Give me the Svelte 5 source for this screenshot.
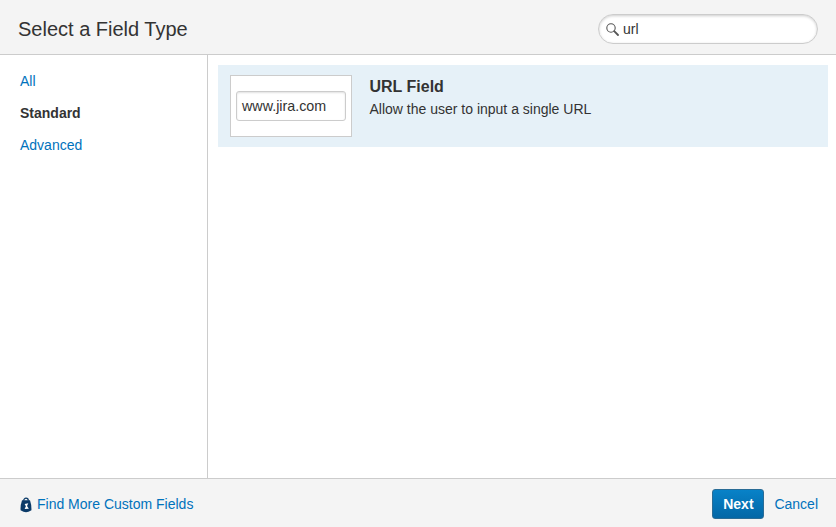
<script>
    let query = $state("url");
    const categories = [
        { name: "All", active: false },
        { name: "Standard", active: true },
        { name: "Advanced", active: false }
    ];
</script>

<div class="dialog">
    <header class="head">
        <h2>Select a Field Type</h2>
        <div class="search">
            <svg width="13" height="13" viewBox="0 0 13 13" fill="none" stroke="#555">
                <circle cx="5" cy="5" r="4.2" stroke-width="1.1" />
                <path d="M8.2 8.2 L12 12" stroke-width="1.8" stroke-linecap="round" />
            </svg>
            <input type="text" bind:value={query} />
        </div>
    </header>

    <div class="body">
        <nav class="side">
            {#each categories as c}
                <a href="#top" class:active={c.active}>{c.name}</a>
            {/each}
        </nav>
        <main class="list">
            <div class="item">
                <div class="preview">
                    <div class="fake">www.jira.com</div>
                </div>
                <div class="info">
                    <h3>URL Field</h3>
                    <p>Allow the user to input a single URL</p>
                </div>
            </div>
        </main>
    </div>

    <footer class="foot">
        <a class="more" href="#top">
            <svg width="12" height="17" viewBox="0 0 13 17">
                <path d="M4 4.4 C4 .8 9 .8 9 4.4" fill="none" stroke="#0b3a68" stroke-width="1.4" />
                <path d="M2.2 4 L10.8 4 Q12.6 9 12.4 14.6 Q9 16.8 6.5 16.8 Q4 16.8 .6 14.6 Q.4 9 2.2 4 Z" fill="#0b3a68" />
                <path d="M5 8 L9 7.2 L7.6 10 L9.6 13 L5 13.4 L6.4 10.4 Z" fill="#fff" />
            </svg>
            Find More Custom Fields
        </a>
        <div class="actions">
            <button type="button">Next</button>
            <a href="#top">Cancel</a>
        </div>
    </footer>
</div>

<style>
    :global(body) {
        margin: 0;
    }
    .dialog {
        display: flex;
        flex-direction: column;
        width: 836px;
        height: 527px;
        overflow: hidden;
        background: #fff;
        color: #333;
        font-family: "Liberation Sans", Arial, sans-serif;
        font-size: 14px;
    }
    a {
        color: #0072bc;
        text-decoration: none;
    }
    .head {
        display: flex;
        flex: none;
        align-items: center;
        justify-content: space-between;
        box-sizing: border-box;
        height: 55px;
        padding: 4px 18px 0;
        background: #f4f4f4;
        border-bottom: 1px solid #ccc;
    }
    h2 {
        margin: 0;
        font-size: 20px;
        font-weight: normal;
        line-height: 30px;
    }
    .search {
        display: flex;
        align-items: center;
        gap: 4px;
        box-sizing: border-box;
        width: 220px;
        height: 30px;
        padding: 0 7px;
        background: #fff;
        border: 1px solid #ccc;
        border-radius: 15px;
        box-shadow: inset 0 1px 3px rgba(0, 0, 0, 0.2);
    }
    .search input {
        flex: 1;
        width: 100%;
        padding: 0;
        border: 0;
        outline: 0;
        background: transparent;
        color: #333;
        font: inherit;
    }
    .body {
        display: flex;
        flex: 1;
        min-height: 0;
    }
    .side {
        display: flex;
        flex: none;
        flex-direction: column;
        gap: 12px;
        box-sizing: border-box;
        width: 208px;
        padding: 16px 20px;
        border-right: 1px solid #ccc;
    }
    .side a {
        line-height: 20px;
    }
    .side a.active {
        color: #333;
        font-weight: bold;
    }
    .list {
        flex: 1;
        padding: 10px 8px 0 10px;
    }
    .item {
        display: flex;
        box-sizing: border-box;
        height: 82px;
        padding: 10px 12px;
        background: #e6f1f8;
    }
    .preview {
        display: flex;
        align-items: center;
        justify-content: center;
        box-sizing: border-box;
        width: 122px;
        height: 62px;
        background: #fff;
        border: 1px solid #ccc;
    }
    .fake {
        box-sizing: border-box;
        width: 110px;
        height: 30px;
        padding: 0 5px;
        border: 1px solid #ccc;
        border-radius: 3px;
        box-shadow: inset 0 1px 2px rgba(0, 0, 0, 0.12);
        font-size: 14.3px;
        line-height: 29px;
    }
    .info {
        margin-left: 17.5px;
    }
    h3 {
        margin: 1px 0 0;
        font-size: 16px;
        font-weight: bold;
        line-height: 22px;
    }
    p {
        margin: 0;
        line-height: 22px;
    }
    .foot {
        display: flex;
        flex: none;
        align-items: center;
        justify-content: space-between;
        box-sizing: border-box;
        height: 49px;
        padding: 2px 18px 0 20px;
        background: #f4f4f4;
        border-top: 1px solid #ccc;
    }
    .more {
        display: flex;
        align-items: center;
        gap: 5px;
    }
    .actions {
        display: flex;
        align-items: center;
        gap: 10px;
    }
    button {
        box-sizing: border-box;
        width: 52px;
        height: 30px;
        padding: 0;
        background: linear-gradient(#0882c8, #0367a6);
        border: 1px solid #2a6c96;
        border-radius: 3px;
        color: #fff;
        font: bold 14px "Liberation Sans", Arial, sans-serif;
    }
</style>
